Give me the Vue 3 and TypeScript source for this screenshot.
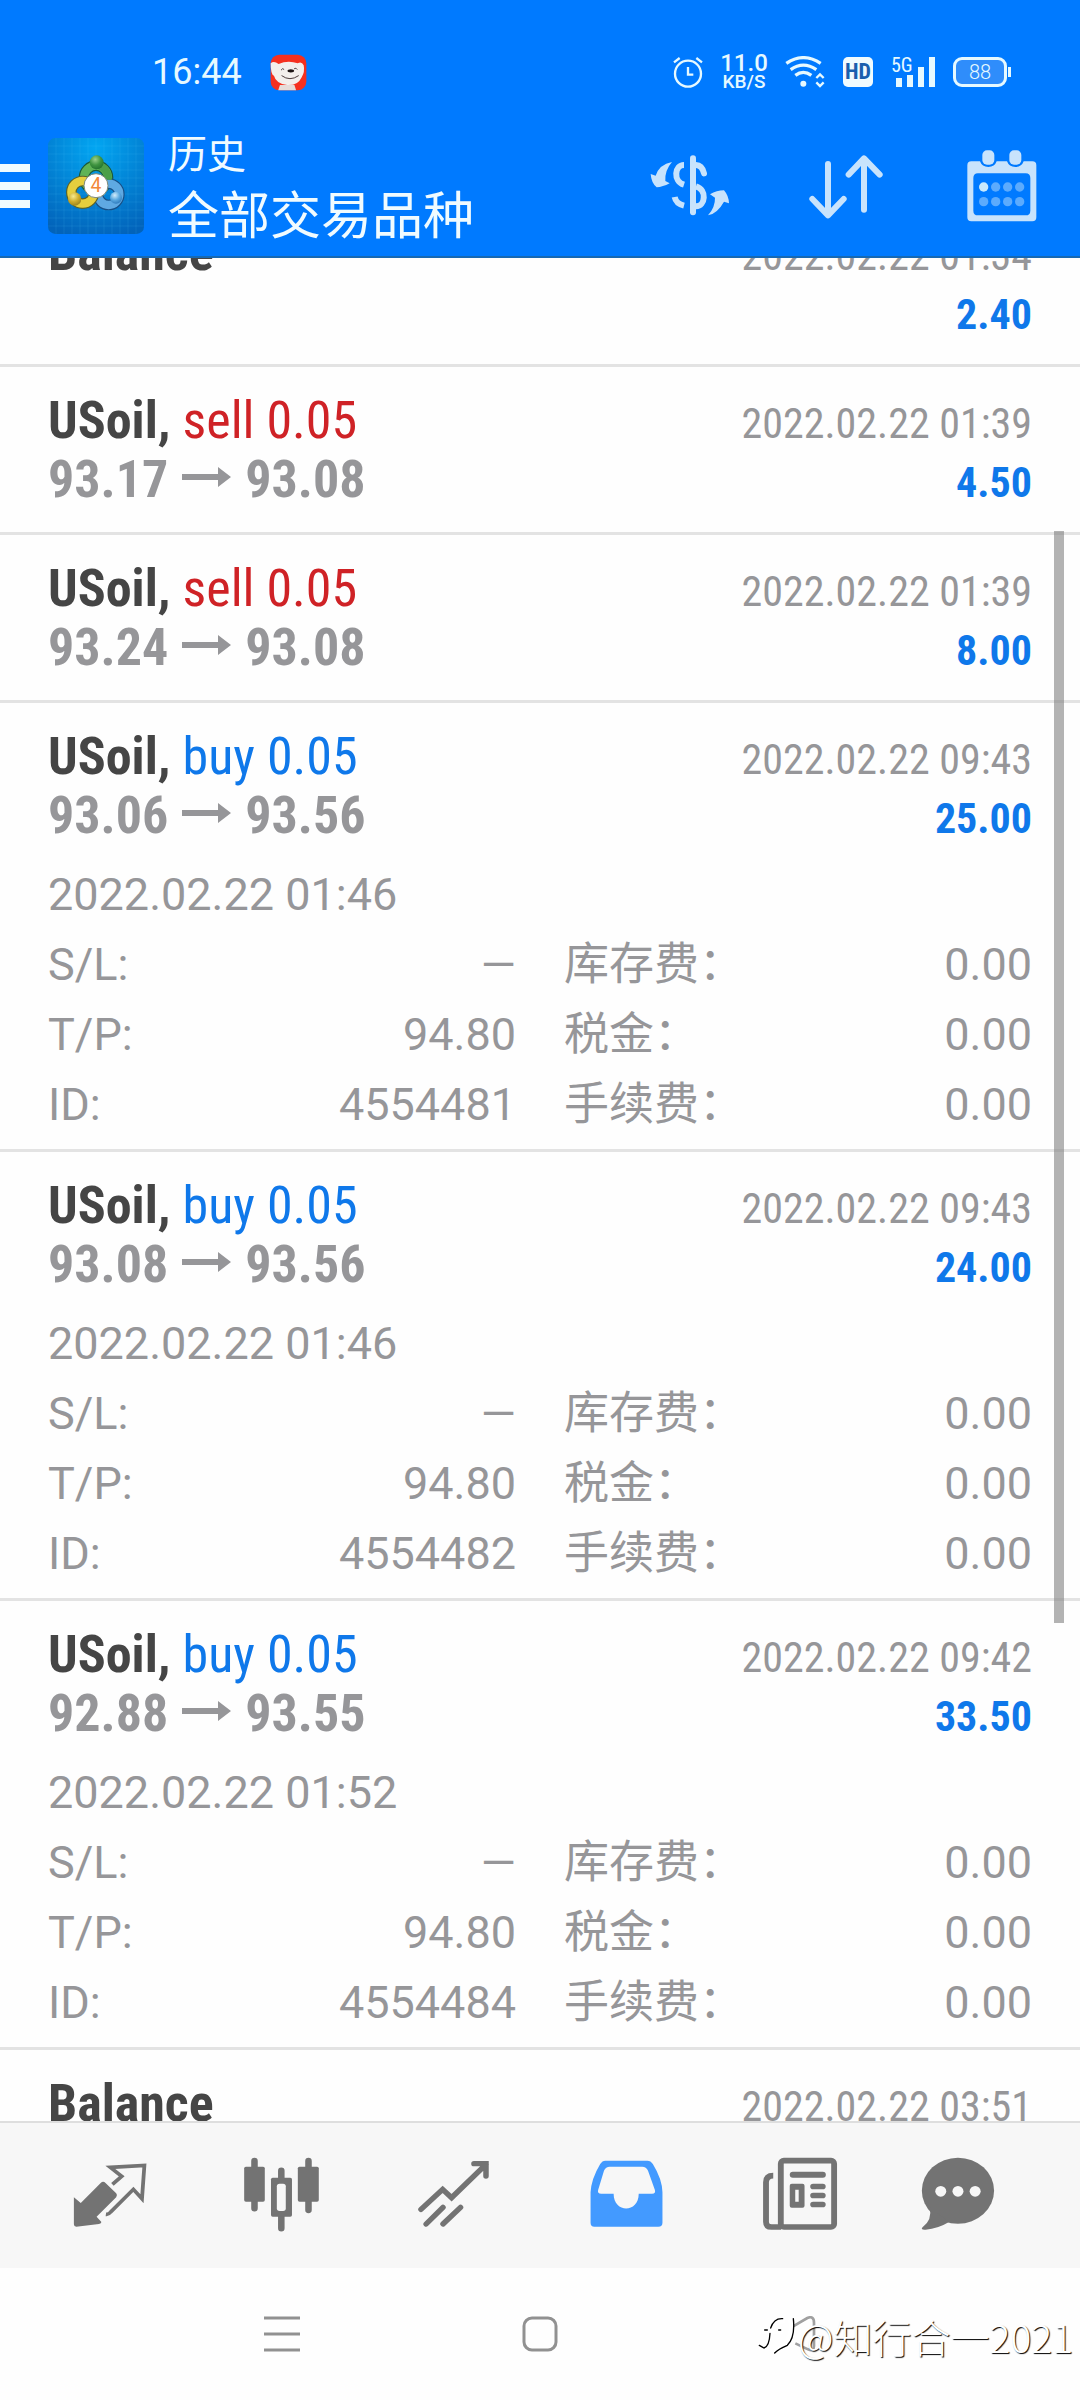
<script setup lang="ts">
interface Deal {
  symbol: string
  side?: 'buy' | 'sell'
  volume?: string
  open?: string
  close?: string
  time: string
  profit: string
  details?: {
    opened: string
    left: [string, string][]
    right: [string, string][]
  }
}

function details(opened: string, id: string): Deal['details'] {
  return {
    opened,
    left: [['S/L:', '—'], ['T/P:', '94.80'], ['ID:', id]],
    right: [['库存费：', '0.00'], ['税金：', '0.00'], ['手续费：', '0.00']],
  }
}

const deals: Deal[] = [
  { symbol: 'Balance', time: '2022.02.22 01:34', profit: '2.40' },
  { symbol: 'USoil', side: 'sell', volume: '0.05', open: '93.17', close: '93.08', time: '2022.02.22 01:39', profit: '4.50' },
  { symbol: 'USoil', side: 'sell', volume: '0.05', open: '93.24', close: '93.08', time: '2022.02.22 01:39', profit: '8.00' },
  { symbol: 'USoil', side: 'buy', volume: '0.05', open: '93.06', close: '93.56', time: '2022.02.22 09:43', profit: '25.00', details: details('2022.02.22 01:46', '4554481') },
  { symbol: 'USoil', side: 'buy', volume: '0.05', open: '93.08', close: '93.56', time: '2022.02.22 09:43', profit: '24.00', details: details('2022.02.22 01:46', '4554482') },
  { symbol: 'USoil', side: 'buy', volume: '0.05', open: '92.88', close: '93.55', time: '2022.02.22 09:42', profit: '33.50', details: details('2022.02.22 01:52', '4554484') },
  { symbol: 'Balance', time: '2022.02.22 03:51', profit: '' },
]
</script>

<template>
  <div class="screen">
    <header class="top">
      <div class="status">
        <span class="clock">16:44</span>
        <svg class="jd" width="37" height="37" viewBox="22 22 112 112" aria-hidden="true">
          <rect x="24" y="24" width="108" height="108" rx="26" fill="#f5301f" />
          <path d="M47 132 L52 116 H96 L101 132Z" fill="#e6dcd8" />
          <path d="M24 50 Q34 42 48 52 Q76 40 106 50 Q118 44 124 56 Q128 76 118 92 Q106 118 74 116 Q40 112 34 88 Q24 84 24 50Z" fill="#f3efec" />
          <path d="M56 70 q4 -7 8 -2 M96 66 q5 -4 8 2 M58 88 Q82 106 108 88" fill="none" stroke="#4a3b3b" stroke-width="3" stroke-linecap="round" />
          <ellipse cx="85" cy="73" rx="10" ry="5" fill="#1c1414" />
        </svg>
        <div class="indicators">
          <svg width="30" height="32" viewBox="42 30 90 96" fill="none" stroke="#e6f9ff" stroke-width="7">
            <circle cx="87" cy="83" r="39" />
            <path d="M87 63 V86 H103 M45 49 L62 36 M129 49 L112 36" />
          </svg>
          <div class="speed"><b>11.0</b><span>KB/S</span></div>
          <svg width="40" height="32" viewBox="383 30 120 96" fill="none" stroke="#e6f9ff" stroke-width="10">
            <path d="M387 52 Q438 18 490 52 M400 71 Q438 44 477 71 M414 88 Q438 70 462 88" />
            <circle cx="438" cy="113" r="9" fill="#e6f9ff" stroke="none" />
            <path d="M477 96 L488 85 L499 96 M477 109 L488 120 L499 109" stroke-width="7" />
          </svg>
          <span class="hd">HD</span>
          <svg class="signal" width="44" height="32" viewBox="0 0 44 32" fill="#e6f9ff">
            <text x="0" y="16" font-size="20">5G</text>
            <path d="M5 22h6v9h-6z M16 19h6v12h-6z M27 11h6v20h-6z M38 1h6v30h-6z" />
          </svg>
          <div class="battery"><span>88</span><i></i></div>
        </div>
      </div>
      <div class="appbar">
        <button class="menu" aria-label="菜单"><i></i><i></i><i></i></button>
        <svg class="logo" width="96" height="96" viewBox="24 27 288 288" aria-hidden="true">
          <defs>
            <radialGradient id="sky" cx="0.5" cy="0.1" r="0.95">
              <stop offset="0" stop-color="#02a6f2" />
              <stop offset="0.5" stop-color="#0284d6" />
              <stop offset="1" stop-color="#0263ba" />
            </radialGradient>
            <radialGradient id="green" cx="0.4" cy="0.3" r="0.8"><stop offset="0" stop-color="#9bd08c" /><stop offset="0.5" stop-color="#3f9440" /><stop offset="1" stop-color="#1d6b2a" /></radialGradient>
            <radialGradient id="gold" cx="0.4" cy="0.3" r="0.8"><stop offset="0" stop-color="#f8eb8e" /><stop offset="0.5" stop-color="#cfae2c" /><stop offset="1" stop-color="#917a1c" /></radialGradient>
            <radialGradient id="azure" cx="0.4" cy="0.3" r="0.8"><stop offset="0" stop-color="#d2ecfb" /><stop offset="0.5" stop-color="#5aa9e0" /><stop offset="1" stop-color="#2570b4" /></radialGradient>
          </defs>
          <rect x="24" y="27" width="288" height="288" rx="22" fill="url(#sky)" />
          <path d="M48 27V315M72 27V315M96 27V315M120 27V315M144 27V315M168 27V315M192 27V315M216 27V315M240 27V315M264 27V315M288 27V315M24 51H312M24 75H312M24 99H312M24 123H312M24 147H312M24 171H312M24 195H312M24 219H312M24 243H312M24 267H312M24 291H312" stroke="#5cc8f5" stroke-opacity="0.2" stroke-width="2" />
          <g fill="none">
            <circle cx="168" cy="146" r="36" stroke="#1b5a3a" stroke-width="32" />
            <circle cx="168" cy="146" r="36" stroke="#5fb356" stroke-width="25" />
            <circle cx="206" cy="196" r="32" stroke="#174f86" stroke-width="32" />
            <circle cx="206" cy="196" r="32" stroke="#5fa9e2" stroke-width="25" />
            <circle cx="128" cy="190" r="34" stroke="#5c6428" stroke-width="32" />
            <circle cx="128" cy="190" r="34" stroke="#e6cf3e" stroke-width="25" />
            <path d="M178 110 Q206 122 204 152" stroke="#4b9f48" stroke-width="22" />
          </g>
          <circle cx="170" cy="100" r="21" fill="url(#green)" />
          <circle cx="104" cy="210" r="20" fill="url(#gold)" />
          <circle cx="228" cy="206" r="18" fill="url(#azure)" />
          <circle cx="168" cy="170" r="36" fill="#fff" stroke="#7d8876" stroke-width="3" />
          <text x="168" y="190" text-anchor="middle" font-size="58" font-family="Roboto, sans-serif" fill="#f2883a">4</text>
        </svg>
        <h1 class="title"><small>历史</small><span>全部交易品种</span></h1>
        <button class="action" aria-label="交易品种">
          <svg width="84" height="76" viewBox="84 353 252 228" fill="none" stroke="#c8e3fc" stroke-width="18">
            <path d="M219 384 V546" stroke-linecap="round" />
            <path d="M192 404 C164 404 158 452 192 463" />
            <path d="M228 404 Q246 404 252 429" stroke-linecap="round" />
            <path d="M228 468 C262 478 256 528 228 528" />
            <path d="M164 500 Q168 520 192 526" />
            <path d="M156 395 Q118 402 107 436 L92 431 Q94 458 110 471 Q128 470 149 459 L136 452 Q134 420 156 395Z M264 555 Q292 550 312 514 L327 519 Q326 496 312 480 Q290 480 270 492 L285 502 Q286 530 264 555Z" fill="#c8e3fc" stroke="none" />
          </svg>
        </button>
        <button class="action" aria-label="排序">
          <svg width="84" height="76" viewBox="552 353 252 228" fill="none" stroke="#c8e3fc" stroke-width="18" stroke-linecap="round" stroke-linejoin="round">
            <path d="M624 401 V553 M577 506 L624 555 L671 506 M732 538 V386 M686 433 L732 384 L779 433" />
          </svg>
        </button>
        <button class="action" aria-label="日期">
          <svg width="84" height="76" viewBox="1022 353 252 228">
            <path fill-rule="evenodd" fill="#c8e3fc" d="M1056 393 H1082 Q1088 410 1107 410 Q1126 410 1132 393 H1163 Q1169 410 1188 410 Q1207 410 1213 393 H1239 Q1251 393 1251 405 V561 Q1251 573 1239 573 H1056 Q1044 573 1044 561 V405 Q1044 393 1056 393Z M1076 429 Q1062 429 1062 443 V541 Q1062 555 1076 555 H1219 Q1233 555 1233 541 V443 Q1233 429 1219 429Z" />
            <rect x="1089" y="360" width="36" height="43" rx="14" fill="#c8e3fc" />
            <rect x="1170" y="360" width="36" height="43" rx="14" fill="#c8e3fc" />
            <g fill="#5cabfd">
              <circle cx="1093" cy="470" r="14" fill="#c8e9fc" /><circle cx="1129" cy="470" r="14" /><circle cx="1165" cy="470" r="14" /><circle cx="1201" cy="470" r="14" />
              <circle cx="1093" cy="514" r="14" /><circle cx="1129" cy="514" r="14" /><circle cx="1165" cy="514" r="14" /><circle cx="1201" cy="514" r="14" />
            </g>
          </svg>
        </button>
      </div>
    </header>

    <main class="history">
      <ul class="deals">
        <li v-for="(deal, i) in deals" :key="i" class="deal">
          <div class="line">
            <span class="symbol">{{ deal.symbol }}<template v-if="deal.side">, <span :class="deal.side">{{ deal.side }} {{ deal.volume }}</span></template></span>
            <time class="time">{{ deal.time }}</time>
          </div>
          <div class="line">
            <span class="prices">
              <template v-if="deal.open">{{ deal.open }}<svg class="arrow" width="49" height="20" viewBox="0 0 49 20"><path d="M0 7H36V0L49 10L36 20V13H0Z" fill="#969699" /></svg>{{ deal.close }}</template>
              <template v-else>&nbsp;</template>
            </span>
            <span class="profit">{{ deal.profit }}</span>
          </div>
          <div v-if="deal.details" class="details">
            <time class="opened">{{ deal.details.opened }}</time>
            <div class="columns">
              <dl v-for="(column, c) in [deal.details.left, deal.details.right]" :key="c">
                <div v-for="[name, value] in column" :key="name" class="pair">
                  <dt>{{ name }}</dt>
                  <dd>{{ value }}</dd>
                </div>
              </dl>
            </div>
          </div>
        </li>
      </ul>
      <div class="thumb"></div>
    </main>

    <nav class="tabs">
      <button aria-label="行情">
        <svg viewBox="163 304 314 324" preserveAspectRatio="none">
          <path d="M215 470L235 487L293 427Q300 420 307 427L338 458Q343 464 338 470L281 528L295 544Q295 549 288 550L222 558Q215 558 215 551Z" fill="#737373" />
          <path d="M327 431L354 407L321 380L420 374L413 474L388 446L322 514Q316 522 308 521" fill="none" stroke="#737373" stroke-width="11" />
        </svg>
      </button>
      <button aria-label="图表">
        <svg viewBox="662 304 314 324" preserveAspectRatio="none" fill="#737373">
          <path d="M739 361V503M896 361V508M817 390V563" stroke="#737373" stroke-width="19" stroke-linecap="round" />
          <rect x="709" y="378" width="60" height="105" rx="5" />
          <rect x="865" y="378" width="61" height="105" rx="5" />
          <rect x="787" y="411" width="61" height="117" rx="5" />
          <rect x="804" y="429" width="26" height="82" rx="8" fill="#f7f7f7" />
        </svg>
      </button>
      <button aria-label="交易">
        <svg viewBox="1161 304 314 324" preserveAspectRatio="none" fill="none" stroke="#737373" stroke-width="16" stroke-linecap="round">
          <path d="M1222 506L1285 446L1311 471L1411 371M1376 369H1411V406M1237 550L1286 500M1286 550L1337 500" />
        </svg>
      </button>
      <button aria-label="历史" aria-current="page">
        <svg viewBox="93 304 314 324" preserveAspectRatio="none">
          <path fill="#439aff" fill-rule="evenodd" d="M190 360H312Q322 360 328 370Q355 415 356 455V546Q356 558 344 558H158Q147 558 147 546V455Q149 415 175 370Q181 360 190 360ZM203 378Q191 378 186 390L169 448Q166 459 178 459H214C214 518 287 518 287 459H326Q337 459 334 448L314 390Q309 378 297 378Z" />
        </svg>
      </button>
      <button aria-label="新闻">
        <svg viewBox="592 304 314 324" preserveAspectRatio="none" fill="none" stroke="#737373" stroke-width="17">
          <rect x="699" y="360" width="155" height="199" rx="9" />
          <path d="M677 405Q656 405 656 425V543Q656 559 672 559H700" />
          <path fill="#737373" stroke="none" fill-rule="evenodd" d="M734 393H821a9 9 0 0 1 0 18H734a9 9 0 0 1 0 -18ZM731 429H762Q768 429 768 435V495Q768 501 762 501H731Q725 501 725 495V435Q725 429 731 429ZM741 447V483H751V447ZM793 429H821a8 8 0 0 1 0 17H793a8 8 0 0 1 0 -17ZM793 456H821a8 8 0 0 1 0 17H793a8 8 0 0 1 0 -17ZM793 483H821a8 8 0 0 1 0 17H793a8 8 0 0 1 0 -17Z" />
        </svg>
      </button>
      <button aria-label="消息">
        <svg viewBox="1092 304 314 324" preserveAspectRatio="none" fill="#737373">
          <ellipse cx="1214" cy="450" rx="105" ry="99" />
          <path d="M1132 500Q1140 538 1111 560Q1104 568 1120 567Q1156 564 1188 544Z" />
          <g fill="#f7f7f7"><circle cx="1164" cy="452" r="16" /><circle cx="1214" cy="452" r="16" /><circle cx="1264" cy="452" r="16" /></g>
        </svg>
      </button>
    </nav>

    <footer class="system">
      <button aria-label="最近任务">
        <svg width="36" height="36" viewBox="0 0 36 36" stroke="#919191" stroke-width="3"><path d="M0 2H36M0 18H36M0 34H36" /></svg>
      </button>
      <button aria-label="主页">
        <svg width="36" height="36" viewBox="0 0 36 36" fill="none" stroke="#919191" stroke-width="3"><rect x="2" y="2" width="32" height="32" rx="8" /></svg>
      </button>
      <button aria-label="返回">
        <svg width="36" height="36" viewBox="90 48 108 108" fill="none" stroke="#a0a0a0" stroke-width="8"><path d="M128 80L172 54Q192 46 192 68V138Q192 156 174 148L136 130" /></svg>
      </button>
      <div class="watermark">
        <svg width="42" height="48" viewBox="24 64 126 144" fill="none" stroke-linecap="round">
          <path d="M104 92Q76 94 66 134Q58 164 36 164M48 124H100M128 92Q138 150 84 180" stroke="#fff" stroke-width="14" />
          <path d="M104 84Q78 82 68 112M50 118H58M92 118H98M66 128Q64 168 48 172L34 164M136 84Q142 140 118 164Q90 176 80 187" stroke="#000" stroke-width="4" />
        </svg>
        <span>@知行合一2021</span>
      </div>
    </footer>
  </div>
</template>

<style>
body {
  background: #fefefe;
}
</style>

<style scoped>
.screen {
  display: flex;
  flex-direction: column;
  height: 100vh;
  overflow: hidden;
  background: #fefefe;
  font-family: Roboto, 'Noto Sans CJK SC', sans-serif;
}
button {
  padding: 0;
  border: 0;
  background: none;
}
svg {
  display: block;
  flex: none;
}
.top {
  flex: none;
  background: #007aff;
  border-bottom: 2px solid #1669b4;
  color: #f0fbff;
}
.status {
  display: flex;
  align-items: center;
  height: 88px;
  padding: 28px 69px 0 152px;
}
.clock {
  font-size: 36px;
  color: #e6f9ff;
}
.jd {
  margin-left: 28px;
}
.indicators {
  display: flex;
  align-items: center;
  gap: 18px;
  margin-left: auto;
  color: #e6f9ff;
}
.speed {
  display: flex;
  flex-direction: column;
  align-items: center;
  width: 46px;
  font-size: 19px;
  font-weight: 500;
  line-height: 18px;
}
.speed b {
  font-size: 24px;
  font-weight: 500;
  line-height: 20px;
}
.hd {
  width: 30px;
  border-radius: 5px;
  background: #f0fbff;
  color: #1a5fae;
  font: 700 22px/30px 'Roboto Condensed', sans-serif;
  text-align: center;
}
.signal {
  overflow: visible;
  font-family: 'Roboto Condensed', sans-serif;
}
.battery {
  display: flex;
  align-items: center;
}
.battery span {
  box-sizing: border-box;
  width: 54px;
  height: 30px;
  border: 3px solid #e6f9ff;
  border-radius: 9px;
  background: #2f8dfb;
  font-size: 20px;
  font-weight: 300;
  line-height: 24px;
  text-align: center;
}
.battery i {
  width: 3px;
  height: 10px;
  margin-left: 1px;
  background: #e6f9ff;
}
.appbar {
  display: flex;
  align-items: center;
  height: 140px;
  padding-right: 36px;
}
.menu {
  display: flex;
  flex-direction: column;
  gap: 10px;
  width: 48px;
}
.menu i {
  width: 30px;
  height: 8px;
  background: #f0fbff;
}
.title {
  display: flex;
  flex-direction: column;
  flex: 1;
  margin: 0 0 0 24px;
  font-size: 51px;
  font-weight: 400;
  line-height: 61px;
}
.title small {
  font-size: 39px;
}
.action {
  width: 84px;
}
.action + .action {
  margin-left: 72px;
}
.history {
  position: relative;
  flex: 1;
  min-height: 0;
  overflow: hidden;
}
.deals {
  margin: -59px 0 0;
  padding: 0;
  list-style: none;
}
.deal {
  padding: 24px 48px 23px;
  border-bottom: 3px solid #e3e3e3;
}
.deal:has(.details) {
  padding-bottom: 9px;
}
.line {
  display: flex;
  align-items: baseline;
  justify-content: space-between;
  height: 59px;
  font-family: 'Roboto Condensed', sans-serif;
  font-size: 52px;
  line-height: 59px;
}
.symbol {
  font-weight: 700;
  color: #454545;
}
.symbol span {
  font-weight: 400;
}
.symbol .buy {
  color: #0f78ea;
}
.symbol .sell {
  color: #cf2226;
}
.prices {
  font-weight: 700;
  color: #969699;
}
.arrow {
  display: inline-block;
  margin: 0 14px;
  vertical-align: 10px;
}
.time {
  font-size: 42px;
  color: #969699;
}
.profit {
  font-size: 42px;
  font-weight: 700;
  color: #0f78ea;
}
.details {
  margin-top: 15px;
  font-size: 45px;
  line-height: 70px;
  color: #969699;
}
.opened {
  display: block;
}
.columns {
  display: grid;
  grid-template-columns: 1fr 1fr;
  gap: 48px;
}
dl,
dd {
  margin: 0;
}
.pair {
  display: flex;
  justify-content: space-between;
  height: 70px;
}
.thumb {
  position: absolute;
  top: 273px;
  right: 16px;
  width: 10px;
  height: 1092px;
  background: rgba(128, 128, 128, 0.6);
}
.tabs {
  display: grid;
  grid-template-columns: repeat(6, 1fr);
  align-items: center;
  flex: none;
  height: 145px;
  padding: 0 24px;
  border-top: 2px solid #dedede;
  background: #f7f7f7;
}
.tabs button {
  display: flex;
  justify-content: center;
}
.tabs svg {
  width: 108px;
  height: 108px;
}
.system {
  position: relative;
  display: grid;
  grid-template-columns: repeat(3, 1fr);
  align-items: center;
  flex: none;
  height: 132px;
  padding: 0 153px;
}
.system button {
  display: flex;
  justify-content: center;
}
.watermark {
  position: absolute;
  right: 7px;
  bottom: 40px;
  display: flex;
  align-items: center;
  font: 300 39px/48px 'Noto Sans CJK SC', sans-serif;
  color: #fff;
  text-shadow: 1px 1px 1px #000;
}
</style>
